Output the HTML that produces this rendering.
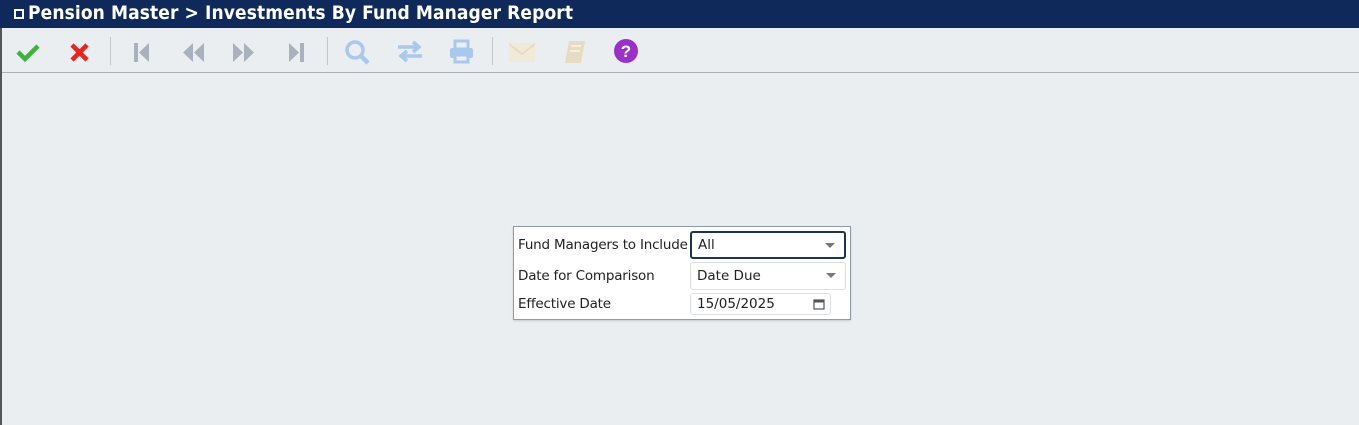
<!DOCTYPE html>
<html><head><style>
*{margin:0;padding:0;box-sizing:border-box}
body{width:1359px;height:425px;overflow:hidden;background:#ebeef1;font-family:"Liberation Sans",sans-serif;position:relative}
.title{position:absolute;left:0;top:0;width:1359px;height:28px;background:#0f2a5a;color:#fff;font-weight:bold;font-size:19px;line-height:27px;padding-left:28px;letter-spacing:0.1px;font-family:"DejaVu Sans Condensed","Liberation Sans Narrow","Liberation Sans",sans-serif}
.title .sq{position:absolute;left:14px;top:9px;width:10px;height:10px;border:2px solid #fff}
.lb{position:absolute;left:0;top:28px;width:2px;height:397px;background:#555}
.tb{position:absolute;left:2px;top:28px;width:1357px;height:45px;background:#ebeef1;border-bottom:1px solid #aeb2b6}
.sep{position:absolute;top:37px;width:1px;height:28px;background:#c3c6ca}
svg.i{position:absolute;top:39px}
.panel{position:absolute;left:513px;top:226px;width:338px;height:94px;background:#fff;border:1px solid #8e9aae;box-shadow:0 1px 2px rgba(0,0,0,.15)}
.lab{position:absolute;left:518px;color:#222;font-family:"DejaVu Sans","Liberation Sans",sans-serif;font-size:13.5px;letter-spacing:-0.2px}
.inp{position:absolute;background:#fff;border:1px solid #dde0e4;border-radius:3px;font-family:"DejaVu Sans","Liberation Sans",sans-serif;font-size:13.5px;color:#222;padding-left:6px}
.arr{position:absolute;right:9px;top:10px;width:0;height:0;border-left:5px solid transparent;border-right:5px solid transparent;border-top:5px solid #777}
</style></head><body>
<div class="title"><span class="sq"></span>Pension Master &gt; Investments By Fund Manager Report</div>
<div class="lb"></div>
<div class="tb"></div>
<svg class="i" style="left:15px" width="26" height="26" viewBox="0 0 26 26"><path d="M3 13 L10 20 L23 7" stroke="#3cb43c" stroke-width="4.5" fill="none"/></svg>
<svg class="i" style="left:68px" width="24" height="26" viewBox="0 0 24 26"><path d="M4 6 L19 21 M19 6 L4 21" stroke="#e8241f" stroke-width="4.5" fill="none"/></svg>
<div class="sep" style="left:110px"></div>
<svg class="i" style="left:131px" width="22" height="26" viewBox="0 0 22 26"><rect x="3" y="4" width="4" height="19" fill="#a9b2bc"/><path d="M18 4 L8 13.5 L18 23Z" fill="#a9b2bc"/></svg>
<svg class="i" style="left:179px" width="30" height="26" viewBox="0 0 30 26"><path d="M14 4 L4 13.5 L14 23Z M25 4 L15 13.5 L25 23Z" fill="#a9b2bc"/></svg>
<svg class="i" style="left:229px" width="30" height="26" viewBox="0 0 30 26"><path d="M4 4 L14 13.5 L4 23Z M15 4 L25 13.5 L15 23Z" fill="#a9b2bc"/></svg>
<svg class="i" style="left:285px" width="22" height="26" viewBox="0 0 22 26"><path d="M4 4 L14 13.5 L4 23Z" fill="#a9b2bc"/><rect x="15" y="4" width="4" height="19" fill="#a9b2bc"/></svg>
<div class="sep" style="left:327px"></div>
<svg class="i" style="left:343px" width="30" height="28" viewBox="0 0 30 28"><circle cx="12" cy="11" r="8" stroke="#a8c8ee" stroke-width="3.5" fill="none"/><path d="M18 17 L25 24" stroke="#a8c8ee" stroke-width="4.5"/></svg>
<svg class="i" style="left:395px" width="30" height="26" viewBox="0 0 30 26"><path d="M3 8 H22 M18 3 L24 8 L18 13 M27 17 H8 M12 12 L6 17 L12 22" stroke="#a8c8ee" stroke-width="3.5" fill="none"/></svg>
<svg class="i" style="left:447px" width="30" height="26" viewBox="0 0 30 26"><rect x="8" y="2" width="13" height="8" fill="none" stroke="#a8c8ee" stroke-width="3"/><rect x="3" y="9" width="23" height="10" rx="2" fill="#a8c8ee"/><rect x="8" y="16" width="13" height="7" fill="#ebeef1" stroke="#a8c8ee" stroke-width="3"/></svg>
<div class="sep" style="left:492px"></div>
<svg class="i" style="left:507px" width="30" height="26" viewBox="0 0 30 26"><rect x="2" y="4" width="26" height="19" fill="#f1ead8"/><path d="M2 5 L15 15 L28 5" stroke="#e7dcc0" stroke-width="2" fill="none"/></svg>
<svg class="i" style="left:561px" width="28" height="26" viewBox="0 0 28 26"><path d="M8 2 H24 L20 24 H4Z" fill="#e6dcc4"/><path d="M10 7 H20 M9 12 H19" stroke="#f4efe2" stroke-width="2"/></svg>
<svg class="i" style="left:613px" width="28" height="28" viewBox="0 0 28 28"><circle cx="13" cy="12" r="12" fill="#9b30c8"/><text x="13" y="18" text-anchor="middle" fill="#fff" font-family="Liberation Sans" font-weight="bold" font-size="17">?</text></svg>
<div class="panel"></div>
<div class="lab" style="top:237px">Fund Managers to Include</div>
<div class="lab" style="top:268px">Date for Comparison</div>
<div class="lab" style="top:296px">Effective Date</div>
<div class="inp" style="left:690px;top:231px;width:156px;height:28px;border:2px solid #1e3350;line-height:24px">All<span class="arr"></span></div>
<div class="inp" style="left:690px;top:262px;width:156px;height:28px;line-height:26px">Date Due<span class="arr"></span></div>
<div class="inp" style="left:690px;top:293px;width:141px;height:22px;line-height:20px">15/05/2025
<svg style="position:absolute;right:5px;top:4px" width="12" height="12" viewBox="0 0 12 12"><rect x="1" y="2" width="10" height="9" fill="none" stroke="#555" stroke-width="1.2"/><rect x="1" y="2" width="10" height="2.5" fill="#555"/></svg></div>
</body></html>
